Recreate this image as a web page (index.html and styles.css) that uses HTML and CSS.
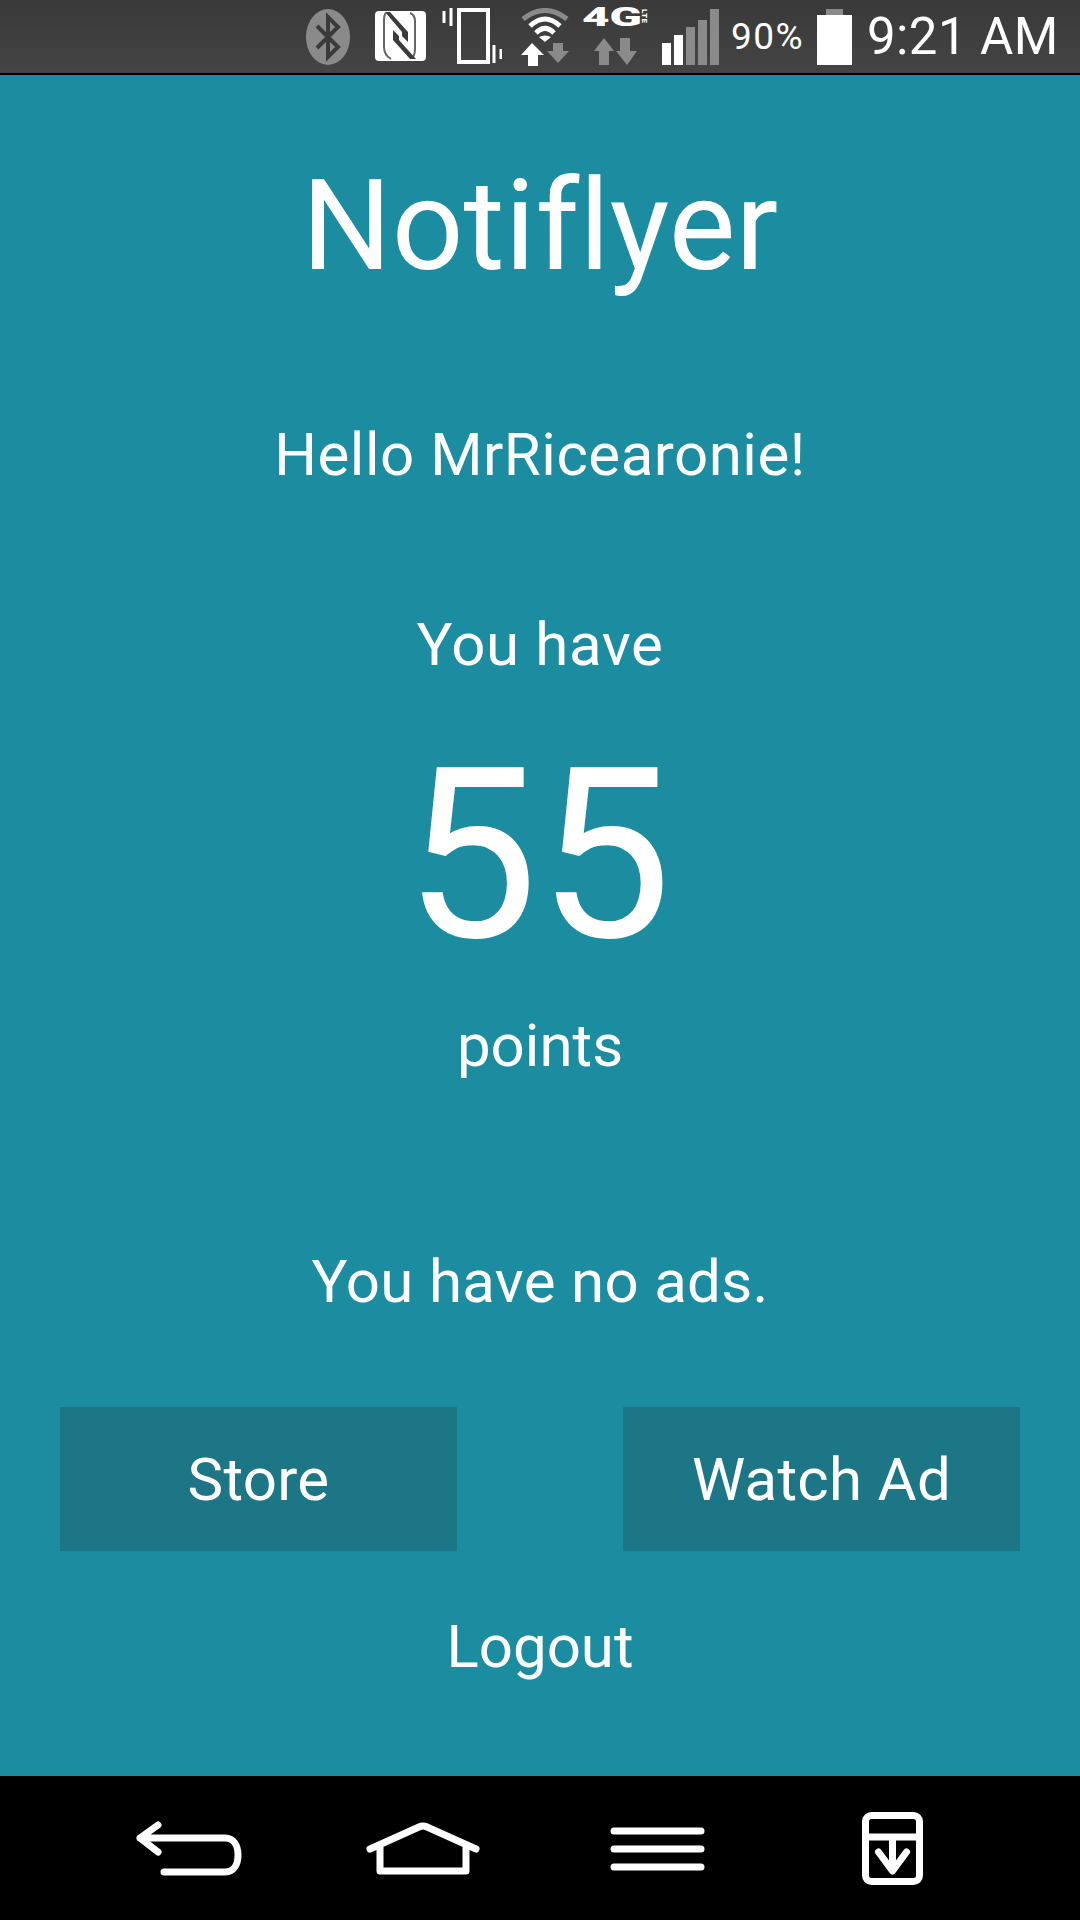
FILE: index.html
```html
<!DOCTYPE html>
<html lang="en">
<head>
<meta charset="utf-8">
<title>Notiflyer</title>
<link rel="stylesheet" href="styles.css">
</head>
<body>
<div class="phone">
  <header class="status">
    <svg class="ic ic-bt" viewBox="0 0 44 56"><ellipse cx="22" cy="28" rx="22" ry="28" fill="#8a8a8a"/><path d="M11 17 L32 38 L22 48 V8 L32 18 L11 39" fill="none" stroke="#3a3a3a" stroke-width="4"/></svg>
    <svg class="ic ic-nfc" viewBox="5 6 51 50"><rect x="5" y="6" width="51" height="50" rx="4" fill="#fff"/><path d="M16 8 Q14 10 14 15 V42 Q14 50 21 54 M40 8 Q45 10 45 16 V44 Q45 50 42 53" fill="none" stroke="#666" stroke-width="2"/><path d="M15 7 H20 L38 27 V37 L32 31 V27 Z" fill="#3c3c3c"/><path d="M23 25 L29 31 V35 L46 54 H40 L23 35 Z" fill="#3c3c3c"/></svg>
    <svg class="ic ic-vib" viewBox="0 0 60 56"><rect x="17" y="2" width="29" height="52" fill="none" stroke="#fff" stroke-width="4"/><path d="M2 3 V15 M9 0 V18 M52 37 V55 M59 41 V51" stroke="#fff" stroke-width="3" fill="none"/></svg>
    <svg class="ic ic-wifi" viewBox="5 5 52 60"><path d="M8 16 Q30 -1 52 16" fill="none" stroke="#8a8a8a" stroke-width="5"/><path d="M15 23 Q30 9 45 23" fill="none" stroke="#fff" stroke-width="5"/><path d="M21 30 Q30 21 39 30" fill="none" stroke="#fff" stroke-width="5"/><path d="M24 34 Q30 31 36 34 L30 39 Z" fill="#fff"/><path d="M38 40 H48 V48 H54 L43 60 L32 48 H38 Z" fill="#8a8a8a"/><path d="M17 40 L29 52 H23 V63 H13 V52 H6 Z" fill="#fff"/></svg>
    <div class="net">
      <div class="net-top"><span class="net-4g">4G</span><span class="net-lte">LTE</span></div>
      <svg class="ic-arrows" viewBox="19 34 44 29"><path d="M29 35 L39 48 H34 V62 H24 V48 H19 Z" fill="#8a8a8a"/><path d="M45 35 H55 V48 H62 L52 62 L41 48 H45 Z" fill="#8a8a8a"/></svg>
    </div>
    <svg class="ic ic-sig" viewBox="0 0 57 56"><rect x="0" y="34" width="9" height="22" fill="#fff"/><rect x="12" y="26" width="9" height="30" fill="#fff"/><rect x="24" y="18" width="9" height="38" fill="#8a8a8a"/><rect x="36" y="11" width="9" height="45" fill="#8a8a8a"/><rect x="48" y="0" width="9" height="56" fill="#8a8a8a"/></svg>
    <span class="pct">90%</span>
    <svg class="ic ic-bat" viewBox="0 0 35 56"><rect x="9" y="0" width="17" height="6" fill="#8a8a8a"/><rect x="0" y="6" width="35" height="50" fill="#fff"/></svg>
    <span class="clock">9:21 AM</span>
  </header>

  <main class="app">
    <h1 class="title">Notiflyer</h1>
    <p class="line hello">Hello MrRicearonie!</p>
    <p class="line youhave">You have</p>
    <p class="points">55</p>
    <p class="line pts">points</p>
    <p class="line ads">You have no ads.</p>
    <div class="buttons">
      <div class="btn">Store</div>
      <div class="btn">Watch Ad</div>
    </div>
    <p class="line logout">Logout</p>
  </main>

  <nav class="nav">
    <svg class="nav-ic nav-back" viewBox="0 0 110 80"><path d="M24 17 L6 30 L24 44 M6 30 H91 C100 30 104 38 104 47 C104 56 100 64 91 64 H30" fill="none" stroke="#fff" stroke-width="7" stroke-linecap="round" stroke-linejoin="round"/></svg>
    <svg class="nav-ic nav-home" viewBox="0 0 120 80"><path d="M7 41 L56 19 Q60 17 64 19 L113 41 M17 37 V63 H103 V37" fill="none" stroke="#fff" stroke-width="7" stroke-linecap="round" stroke-linejoin="round"/></svg>
    <svg class="nav-ic nav-menu" viewBox="0 0 100 80"><path d="M7 23 H94 M7 41 H94 M7 59 H94" fill="none" stroke="#fff" stroke-width="7" stroke-linecap="round"/></svg>
    <svg class="nav-ic nav-recent" viewBox="0 0 100 80"><rect x="24.500" y="7.500" width="54" height="66" rx="6" fill="none" stroke="#fff" stroke-width="7"/><path d="M24.500 29 H78.500 M51.500 29 V62 M37.500 44 L51.500 63 L65.500 44" fill="none" stroke="#fff" stroke-width="7" stroke-linecap="round" stroke-linejoin="round"/></svg>
  </nav>
</div>
</body>
</html>
```
FILE: styles.css
```css
* { box-sizing: border-box; margin: 0; padding: 0; }
html, body { width: 1080px; height: 1920px; overflow: hidden; }
body { font-family: Roboto, "Liberation Sans", sans-serif; background: #000; color: #fff; }
.phone { display: flex; flex-direction: column; width: 1080px; height: 1920px; }

.status {
  flex: 0 0 75px; height: 75px; display: flex; align-items: flex-start;
  padding: 9px 0 0 306px;
  background: linear-gradient(#393939, #444444);
  border-bottom: 2px solid #000;
}
.ic { display: block; height: 56px; flex: none; }
.ic-bt { width: 44px; margin-right: 25px; }
.ic-nfc { width: 51px; height: 50px; margin-right: 16px; margin-top: 2px; }
.ic-vib { width: 60px; margin-right: 18px; margin-top: -1px; }
.ic-wifi { width: 52px; height: 60px; margin-right: 10px; margin-top: -1px; }
.net { width: 66px; height: 56px; margin-right: 14px; flex: none; }
.net-top { display: flex; align-items: flex-start; height: 18px; }
.net-4g { font-size: 25px; line-height: 18px; font-weight: 900; width: 58px; transform: scaleX(1.9); transform-origin: left center; }
.net-lte { font-size: 8px; line-height: 8px; font-weight: 900; writing-mode: vertical-rl; letter-spacing: 0.5px; }
.ic-arrows { display: block; width: 44px; height: 29px; margin: 10px 0 0 12px; }
.ic-sig { width: 57px; margin-right: 12px; }
.pct { font-size: 37px; letter-spacing: 1.5px; line-height: 56px; flex: none; width: 71px; margin-right: 15px; white-space: nowrap; }
.ic-bat { width: 35px; margin-right: 16px; }
.clock { font-size: 51px; letter-spacing: 0.4px; line-height: 56px; flex: none; white-space: nowrap; margin-left: -1px; }

.app {
  flex: 1; display: flex; flex-direction: column; align-items: center;
  background: #1c8ca1; text-align: center; font-weight: 400;
}
.title { font-size: 126px; line-height: 140px; font-weight: 400; margin-top: 81px; font-variant-ligatures: none; }
.line { font-size: 60px; line-height: 70px; }
.hello { margin-top: 124px; letter-spacing: 0.5px; }
.youhave { margin-top: 120px; letter-spacing: 0.6px; }
.points { font-size: 238px; line-height: 240px; margin-top: 56px; margin-right: 4px; }
.pts { margin-top: 35px; }
.ads { margin-top: 166px; letter-spacing: 0.3px; }
.buttons { display: flex; justify-content: space-between; width: 960px; margin-top: 90px; }
.btn { width: 397px; height: 144px; padding-top: 2px; background: #1c7686; font-size: 60px; line-height: 142px; letter-spacing: 0.3px; }
.logout { margin-top: 61px; }

.nav {
  flex: 0 0 144px; display: grid; grid-template-columns: repeat(4, 234px);
  justify-content: center; align-items: center; background: #000;
}
.nav-ic { justify-self: center; height: 80px; display: block; }
.nav-back { width: 110px; }
.nav-home { width: 120px; }
.nav-menu { width: 100px; }
.nav-recent { width: 100px; }
```
